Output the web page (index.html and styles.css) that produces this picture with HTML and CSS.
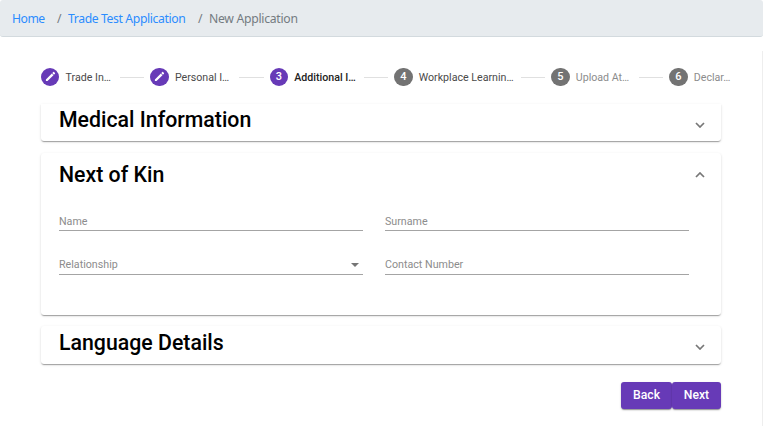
FILE: index.html
```html
<!DOCTYPE html>
<html lang="en">
<head>
<meta charset="utf-8">
<title>New Application</title>
<link rel="stylesheet" href="styles.css">
</head>
<body>
<nav class="breadcrumb">
  <a class="crumb-home" href="#">Home</a><span class="sep">/</span><a class="crumb-trade" href="#">Trade Test Application</a><span class="sep">/</span><span class="crumb-current">New Application</span>
</nav>
<main class="page">
  <div class="stepper">
    <div class="step done"><span class="dot"><svg viewBox="0 0 24 24"><path d="M3.5 17.5V20.5h3L17.5 9.5l-3-3zM18.3 8.7l1.9-1.9a1 1 0 0 0 0-1.4l-1.6-1.6a1 1 0 0 0-1.4 0l-1.9 1.9z"/></svg></span><span class="step-label">Trade In…</span><i></i></div>
    <div class="step done"><span class="dot"><svg viewBox="0 0 24 24"><path d="M3.5 17.5V20.5h3L17.5 9.5l-3-3zM18.3 8.7l1.9-1.9a1 1 0 0 0 0-1.4l-1.6-1.6a1 1 0 0 0-1.4 0l-1.9 1.9z"/></svg></span><span class="step-label">Personal I…</span><i></i></div>
    <div class="step current"><span class="dot">3</span><span class="step-label">Additional I…</span><i></i></div>
    <div class="step ready"><span class="dot">4</span><span class="step-label">Workplace Learnin…</span><i></i></div>
    <div class="step"><span class="dot">5</span><span class="step-label">Upload At…</span><i></i></div>
    <div class="step"><span class="dot">6</span><span class="step-label">Declar…</span></div>
  </div>
  <section class="panel first">
    <header><h2 class="t-medical">Medical Information</h2><svg class="chevron" viewBox="0 0 10 6"><path d="M1 1l4 4 4-4"/></svg></header>
  </section>
  <section class="panel open">
    <header><h2 class="t-kin">Next of Kin</h2><svg class="chevron" viewBox="0 0 10 6"><path d="M1 5l4-4 4 4"/></svg></header>
    <div class="fields">
      <div class="field"><span>Name</span></div>
      <div class="field"><span>Surname</span></div>
      <div class="field"><span>Relationship</span><b class="arrow"></b></div>
      <div class="field"><span>Contact Number</span></div>
    </div>
  </section>
  <section class="panel last">
    <header><h2 class="t-language">Language Details</h2><svg class="chevron" viewBox="0 0 10 6"><path d="M1 1l4 4 4-4"/></svg></header>
  </section>
  <div class="actions"><button class="back">Back</button><button class="next">Next</button></div>
</main>
</body>
</html>
```
FILE: styles.css
```css
* { box-sizing: border-box; }
body { margin: 0; height: 432px; overflow: hidden; background: #fff; font-family: Roboto, sans-serif; }
.breadcrumb {
  display: flex; align-items: center; height: 37px; padding: 2px 0 0 12px;
  background: #e7ebee; border-bottom: 1px solid #d3dade; border-radius: 3px;
  font: 12.2px/18px "Noto Sans", sans-serif; color: #747b81; white-space: nowrap;
}
.breadcrumb a { color: #2b8cff; text-decoration: none; }
.crumb-home { width: 45px; letter-spacing: -.5px; }
.crumb-trade { width: 130px; letter-spacing: -.38px; }
.crumb-current { letter-spacing: -.28px; }
.sep { width: 11px; }
.page { height: 375px; margin-top: 14px; padding: 16px 41px 0; border-right: 1px solid #eee; }
.stepper { display: grid; grid-template-columns: 109.3px 119.4px 124.5px 157px 118px 70px; height: 20px; }
.step { display: flex; align-items: center; font-size: 10.65px; color: #8c8c8c; white-space: nowrap; }
.step i { width: 24.5px; height: 1px; margin: 0 6px 0 auto; background: #e0e0e0; }
.dot {
  flex: none; display: flex; align-items: center; justify-content: center;
  width: 18.4px; height: 18.4px; margin-right: 6.2px; border-radius: 50%;
  background: #737373; color: #fff; font-size: 11px; font-weight: 500;
}
.dot svg { width: 13px; height: 13px; fill: #fff; }
.done .dot, .current .dot { background: #673ab7; }
.done, .ready { color: #4a4a4a; }
.current { color: #222; font-weight: 500; }
.panel {
  width: 680px; height: 37.5px; margin-bottom: 11px; padding: 0 16px 0 18px;
  border-radius: 3px; background: #fff;
  box-shadow: 0 2px 1px -1px rgba(0,0,0,.2), 0 1px 1px rgba(0,0,0,.14), 0 1px 3px rgba(0,0,0,.12);
}
.first { height: 37px; margin: 17px 0 12px; border-radius: 0 0 3px 3px; }
.open { height: 162px; }
.panel header { display: flex; justify-content: space-between; height: 37px; }
h2 { margin: 2px 0 0; font-size: 21.3px; line-height: 28px; font-weight: 500; color: #000; white-space: nowrap; }
.open h2 { margin-top: 8px; }
.last h2 { margin-top: 3px; }
.chevron { width: 10px; height: 6px; margin-top: 18px; fill: none; stroke: #777; stroke-width: 1.7; }
.open .chevron { margin-top: 19px; }
.fields { display: grid; grid-template-columns: 303.5px 303.5px; column-gap: 22.5px; row-gap: 23px; margin-top: 20.5px; }
.field { display: flex; justify-content: space-between; height: 20.5px; padding-right: 4px; border-bottom: 1px solid #a4a4a4; color: #8c8c8c; font-size: 10.7px; line-height: 21px; }
.arrow { width: 0; height: 0; margin-top: 9px; border: 4px solid transparent; border-top-color: #757575; border-bottom: 0; }
.actions { display: flex; width: 680px; justify-content: flex-end; margin-top: 18px; }
button {
  height: 27.5px; padding: 0; border: 0; border-radius: 3px; background: #673ab7; color: #fff;
  font: 500 12.2px Roboto, sans-serif;
  box-shadow: 0 2px 1px -1px rgba(0,0,0,.25), 0 1px 2px rgba(0,0,0,.25);
}
.back { width: 51px; }
.next { width: 49px; }
```
